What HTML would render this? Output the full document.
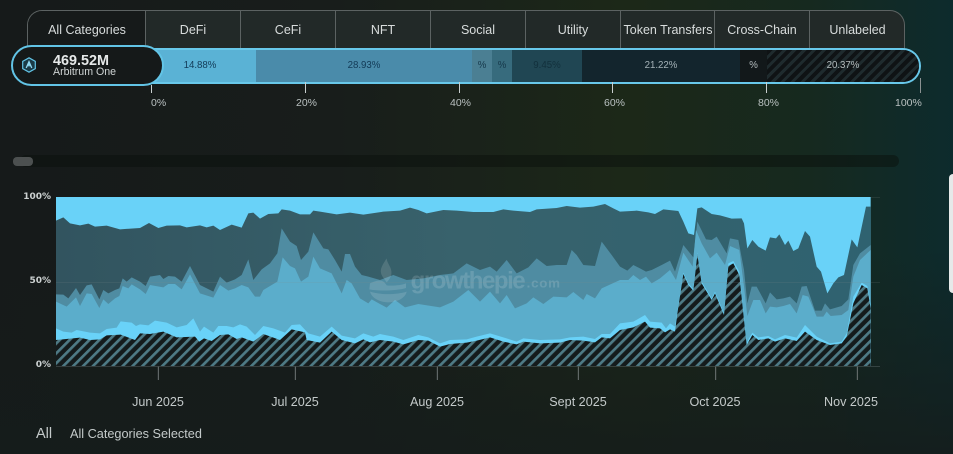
<!DOCTYPE html>
<html lang="en">
<head>
<meta charset="utf-8">
<title>Arbitrum One Categories</title>
<style>
html,body{margin:0;padding:0}
body{width:953px;height:454px;overflow:hidden;position:relative;font-family:"Liberation Sans",sans-serif;color:#cdd3d3;
background:linear-gradient(180deg,rgba(21,28,27,0) 55%,rgba(21,28,27,.85) 100%),linear-gradient(90deg,#161a1a 0,#181d1b 35%,#1c2818 66%,#16291f 85%,#0d2b2d 100%)}
.a{position:absolute;white-space:nowrap}
.tabs{position:absolute;left:27px;top:10px;width:878px;height:39px;box-sizing:border-box;border:1px solid #5c6262;border-bottom:0;border-radius:15px 15px 0 0;overflow:hidden;background:#222928}
.tab{position:absolute;top:0;height:39px;line-height:38px;text-align:center;font-size:12.5px;color:#d8dcdc;border-left:1px solid #5c6262;box-sizing:border-box}
.seg{position:absolute;top:0;height:32px;line-height:32px;text-align:center;font-size:9.7px}
.pct{font-size:10.5px;color:#b9c0c0;top:97px}
.tk{position:absolute;width:1px;background:#c9cfcf}
.xl{font-size:12.6px;color:#c4caca;top:395px;width:80px;text-align:center}
.yl{font-weight:bold;font-size:9px;color:#ccd1d1;text-align:right;width:40px;left:11px;font-family:"DejaVu Sans",sans-serif}
</style>
</head>
<body>
<div class="tabs">
  <div class="tab" style="left:0;width:118px;background:#161a1a;border-left:0">All Categories</div>
  <div class="tab" style="left:117px;width:95px">DeFi</div>
  <div class="tab" style="left:212px;width:95px">CeFi</div>
  <div class="tab" style="left:307px;width:95px">NFT</div>
  <div class="tab" style="left:402px;width:95px">Social</div>
  <div class="tab" style="left:497px;width:95px">Utility</div>
  <div class="tab" style="left:592px;width:95px">Token Transfers</div>
  <div class="tab" style="left:686px;width:95px">Cross-Chain</div>
  <div class="tab" style="left:781px;width:96px">Unlabeled</div>
</div>

<div class="a" style="left:100px;top:48px;width:821px;height:36px;box-sizing:border-box;border:2px solid #68c8ea;border-left:0;border-radius:0 18px 18px 0;overflow:hidden;background:#12181a">
  <div class="seg" style="left:0;width:156px;background:#5ab2d5;color:#123a56;padding-left:44px;box-sizing:border-box">14.88%</div>
  <div class="seg" style="left:156px;width:216px;background:#4a8baa;color:#123a56">28.93%</div>
  <div class="seg" style="left:372px;width:20px;background:#4b7f93;color:#16384a">%</div>
  <div class="seg" style="left:392px;width:20px;background:#376b7d;color:#16384a">%</div>
  <div class="seg" style="left:412px;width:70px;background:#204653;color:#12303c">9.45%</div>
  <div class="seg" style="left:482px;width:158px;background:#13252d;color:#a4b2b7">21.22%</div>
  <div class="seg" style="left:640px;width:27px;background:#12181a;color:#b4bcbe">%</div>
  <div class="seg" style="left:667px;width:152px;color:#b4bcbe;background:repeating-linear-gradient(135deg,#0f1315 0 4px,#1f2b2e 4px 7px)">20.37%</div>
</div>

<div class="a" style="left:11px;top:45px;width:153px;height:41px;box-sizing:border-box;border:2px solid #62c4e6;border-radius:21px;background:#151919"></div>
<svg class="a" style="left:20px;top:56px" width="18" height="18" viewBox="0 0 18 18"><path d="M9 1.8 15.3 5.4V12.6L9 16.2 2.7 12.6V5.4Z" fill="#1a3a46" stroke="#62c4e6" stroke-width="1.2"/><path d="M6.2 12 9 5.6 11.8 12M7.8 10.3 9 7.6 10.2 10.3" fill="none" stroke="#8fd8f2" stroke-width="1.3"/></svg>
<div class="a" style="left:53px;top:53px;font-size:14.4px;font-weight:bold;color:#e6e9e9;line-height:16px">469.52M</div>
<div class="a" style="left:53px;top:66px;font-size:10.6px;color:#cfd4d4;line-height:13px">Arbitrum One</div>

<div class="tk" style="left:151px;top:85px;height:8px"></div>
<div class="tk" style="left:305px;top:82px;height:11px"></div>
<div class="tk" style="left:459px;top:82px;height:11px"></div>
<div class="tk" style="left:612px;top:82px;height:11px"></div>
<div class="tk" style="left:766px;top:82px;height:11px"></div>
<div class="tk" style="left:920px;top:78px;height:15px;background:#8b9292"></div>
<div class="a pct" style="left:151px">0%</div>
<div class="a pct" style="left:296px">20%</div>
<div class="a pct" style="left:450px">40%</div>
<div class="a pct" style="left:604px">60%</div>
<div class="a pct" style="left:758px">80%</div>
<div class="a pct" style="left:895px">100%</div>

<div class="a" style="left:20px;top:155px;width:879px;height:12px;border-radius:6px;background:rgba(10,16,12,.5)"></div>
<div class="a" style="left:13px;top:157px;width:20px;height:8.5px;border-radius:4px;background:#4c5050"></div>
<div class="a" style="left:949px;top:174px;width:4px;height:119px;border-radius:4px 0 0 4px;background:#e6e9e9"></div>

<svg class="a" style="left:0;top:180px" width="953" height="274" viewBox="0 0 2859 822">
  <defs>
    <pattern id="st" width="21" height="21" patternUnits="userSpaceOnUse" patternTransform="rotate(45)">
      <rect width="21" height="21" fill="#141b1c"/>
      <rect width="8" height="21" fill="#4e7a85"/>
    </pattern>
    <linearGradient id="dk" x1="0" y1="0" x2="1" y2="0"><stop offset="0" stop-color="#32545f"/><stop offset=".5" stop-color="#38626c"/><stop offset="1" stop-color="#2f6270"/></linearGradient>
  </defs>
  <rect x="168" y="51" width="2444" height="507" fill="#69d2f8"/>
  <polygon fill="url(#dk)" points="168,122 190,112 210,130 240,136 265,131 285,140 320,137 360,148 420,144 447,129 475,144 500,137 540,136 560,142 600,136 620,142 640,137 660,150 695,134 725,143 745,100 760,98 780,116 805,102 835,100 845,88 870,92 900,103 930,103 940,92 960,95 1010,103 1050,98 1090,104 1150,95 1200,92 1230,83 1255,90 1280,100 1330,90 1370,92 1420,96 1480,96 1510,88 1540,92 1590,96 1610,88 1670,84 1700,78 1740,83 1780,80 1815,72 1840,85 1860,95 1910,92 1945,97 1965,102 1990,88 2035,93 2050,125 2065,160 2082,165 2092,85 2105,82 2135,102 2160,106 2195,116 2225,115 2232,130 2242,205 2257,180 2275,200 2297,212 2310,172 2328,175 2338,163 2355,195 2365,182 2380,213 2395,205 2415,153 2430,170 2450,260 2463,275 2482,340 2500,310 2515,292 2532,285 2555,178 2572,202 2598,80 2612,80 2612,558 168,558"/>
  <polygon fill="#4f8ca2" points="168,343 190,344 205,355 228,324 240,345 260,316 275,313 298,358 310,330 325,340 345,330 358,325 368,295 380,305 395,292 420,305 437,318 450,290 480,285 490,297 505,288 525,290 545,305 570,258 600,315 640,335 660,290 680,308 705,298 725,285 745,238 760,300 785,268 810,250 832,220 845,145 870,185 890,198 903,240 925,215 940,157 970,205 985,208 1005,240 1025,275 1035,222 1050,222 1065,260 1085,285 1105,290 1140,300 1180,285 1220,300 1270,295 1320,285 1360,280 1400,250 1440,270 1470,260 1490,275 1520,240 1550,280 1585,262 1610,235 1640,258 1670,255 1700,255 1715,210 1730,225 1750,255 1785,258 1805,185 1835,225 1860,260 1882,272 1900,255 1920,265 1938,275 1955,270 1985,255 2010,242 2025,275 2050,195 2080,232 2092,125 2118,178 2135,180 2150,170 2180,220 2190,175 2215,180 2232,270 2242,370 2255,320 2270,320 2297,370 2310,337 2330,358 2350,355 2370,350 2390,370 2405,320 2420,318 2445,392 2465,392 2475,370 2490,388 2525,378 2545,358 2560,255 2580,220 2612,195 2612,558 168,558"/>
  <polygon fill="#5badcb" points="168,365 200,380 228,352 240,378 260,340 275,342 298,384 310,358 325,372 345,355 358,348 368,318 385,325 395,313 420,328 437,342 450,315 490,322 505,312 525,312 545,328 570,283 600,340 640,353 660,315 685,332 705,325 725,315 745,322 765,350 780,350 790,330 832,305 848,232 870,258 885,265 903,305 925,290 940,230 960,265 995,280 1025,340 1040,300 1055,310 1080,355 1105,370 1115,358 1160,383 1185,360 1215,382 1255,372 1320,382 1360,365 1405,330 1440,365 1470,335 1500,370 1520,345 1545,385 1580,370 1600,352 1630,372 1660,350 1700,352 1720,336 1750,360 1760,342 1785,355 1805,325 1860,300 1885,300 1900,285 1920,300 1938,290 1955,310 1980,295 2010,270 2028,300 2050,218 2078,260 2088,150 2105,190 2130,235 2150,218 2175,255 2190,198 2218,210 2232,320 2242,408 2260,360 2280,360 2297,400 2310,380 2330,382 2350,378 2370,372 2390,400 2408,345 2425,350 2450,410 2470,410 2480,395 2492,408 2525,405 2545,390 2560,290 2580,240 2612,210 2612,558 168,558"/>
  <polygon fill="#69d2f8" points="168,445 190,455 215,458 230,450 270,458 300,460 320,447 350,443 362,424 395,428 408,438 420,433 445,436 465,422 500,428 530,442 560,435 580,415 600,455 612,440 640,458 655,438 680,438 700,442 720,433 740,440 765,465 790,438 820,445 855,458 875,435 900,433 925,460 960,470 995,440 1025,467 1065,475 1090,460 1120,470 1140,462 1180,470 1210,480 1255,465 1285,472 1320,490 1350,480 1400,478 1430,470 1470,460 1510,472 1550,485 1570,475 1620,480 1680,478 1710,472 1750,470 1785,477 1805,462 1830,462 1860,430 1900,425 1935,405 1950,425 1985,428 1998,445 2010,430 2025,440 2032,395 2050,278 2065,310 2080,328 2092,218 2105,305 2135,355 2145,335 2172,400 2185,250 2200,243 2218,275 2240,488 2257,458 2275,472 2305,468 2325,478 2355,465 2390,473 2415,435 2450,470 2490,490 2525,485 2540,460 2560,350 2585,308 2602,318 2612,375 2612,558 168,558"/>
  <polygon fill="url(#st)" points="168,480 210,476 240,473 270,480 300,478 320,466 362,464 405,480 420,460 450,462 490,455 530,472 585,470 598,485 612,475 635,483 660,465 685,463 710,477 725,472 760,485 790,462 840,480 875,448 915,457 920,480 960,488 995,455 1025,480 1065,490 1090,478 1110,487 1140,480 1180,485 1210,493 1255,480 1285,482 1320,500 1350,492 1400,488 1430,482 1470,472 1510,485 1550,493 1570,485 1620,490 1680,488 1710,480 1750,482 1785,487 1805,472 1830,475 1860,450 1900,442 1935,425 1950,443 1980,445 1995,457 2010,448 2025,455 2032,400 2050,282 2065,315 2080,332 2092,222 2105,310 2135,360 2145,340 2172,405 2185,258 2200,250 2218,285 2240,495 2257,465 2275,480 2305,475 2325,485 2355,475 2390,483 2415,455 2450,480 2490,495 2525,490 2540,470 2560,370 2585,315 2602,325 2612,385 2612,558 168,558"/>
  <g stroke="#7f8a8c" stroke-width="2" opacity=".25">
    <line x1="168" y1="307" x2="2640" y2="307"/>
    <line x1="2612" y1="52" x2="2640" y2="52"/>
  </g>
  <line x1="168" y1="559" x2="2640" y2="559" stroke="#7f8a8c" stroke-width="2" opacity=".5"/>
  <g stroke="#6f7676" stroke-width="3">
    <line x1="475" y1="560" x2="475" y2="600"/>
    <line x1="886" y1="560" x2="886" y2="600"/>
    <line x1="1312" y1="560" x2="1312" y2="600"/>
    <line x1="1735" y1="560" x2="1735" y2="600"/>
    <line x1="2147" y1="560" x2="2147" y2="600"/>
    <line x1="2572" y1="560" x2="2572" y2="600"/>
  </g>
  <g fill="#fff" opacity=".13">
    <path d="M1160 235c-14 22-22 34-15 50 4 9 11 15 15 22 9-10 19-22 12-42-3-9-11-18-12-30z"/>
    <path d="M1110 310c30-14 40-10 50 6 16 2 44 0 58-6v14c-26 8-80 10-110 4zM1110 335c30 10 80 10 110 0-4 20-30 32-55 32s-50-12-55-32z"/>
  </g>
  <text x="1232" y="326" font-family="Liberation Sans, sans-serif" font-size="72" font-weight="bold" fill="#fff" opacity=".14" textLength="345">growthepie</text>
  <text x="1580" y="322" font-family="Liberation Sans, sans-serif" font-size="40" font-weight="bold" fill="#fff" opacity=".14" textLength="100">.com</text>
</svg>

<div class="a yl" style="top:192px">100%</div>
<div class="a yl" style="top:276px">50%</div>
<div class="a yl" style="top:360px">0%</div>

<div class="a xl" style="left:118px">Jun 2025</div>
<div class="a xl" style="left:255px">Jul 2025</div>
<div class="a xl" style="left:397px">Aug 2025</div>
<div class="a xl" style="left:538px">Sept 2025</div>
<div class="a xl" style="left:675px">Oct 2025</div>
<div class="a xl" style="left:811px">Nov 2025</div>

<div class="a" style="left:36px;top:426px;font-size:14.5px;color:#c4caca">All</div>
<div class="a" style="left:70px;top:427px;font-size:12.7px;color:#c4caca">All Categories Selected</div>
</body>
</html>
